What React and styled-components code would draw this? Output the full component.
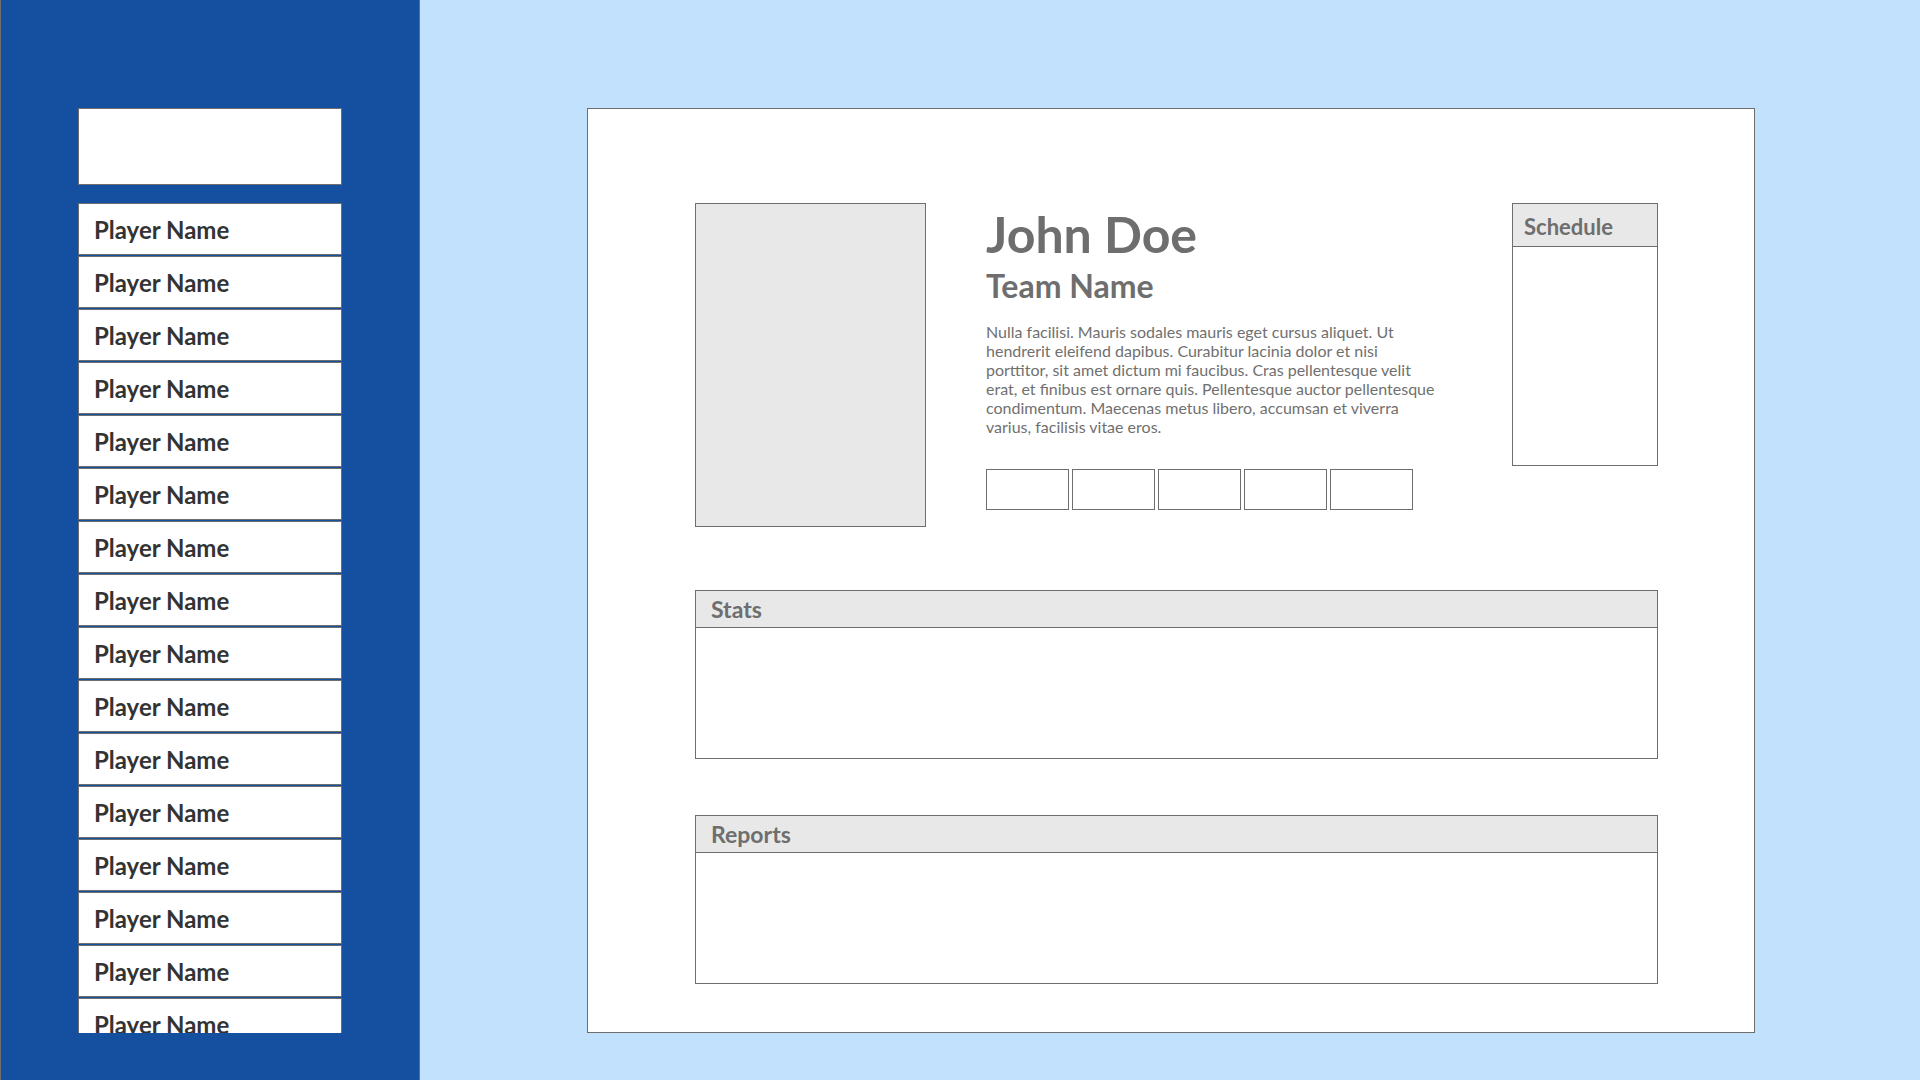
import React from 'react';
import styled, { createGlobalStyle } from 'styled-components';

const GlobalStyle = createGlobalStyle`
    html, body {
        margin: 0;
        padding: 0;
    }
    body {
        font-family: Lato, "Open Sans", sans-serif;
        background-color: #c1e1fd;
    }
`;

const Page = styled.div`
    display: flex;
    width: 1920px;
    height: 1080px;
    overflow: hidden;
`;

const Sidebar = styled.aside`
    box-sizing: border-box;
    width: 420px;
    height: 1080px;
    background-color: #14509f;
    border-left: 1px solid #6e6e6e;
    border-right: 1px solid #6e6e6e;
    padding: 108px 77px 47px;
    display: flex;
    flex-direction: column;
`;

const SearchBox = styled.div`
    box-sizing: border-box;
    height: 77px;
    background-color: #fff;
    border: 1px solid #6e6e6e;
    flex-shrink: 0;
`;

const PlayerList = styled.ul`
    list-style: none;
    margin: 18px 0 0;
    padding: 0;
    flex: 1;
    overflow: hidden;
`;

const PlayerItem = styled.li`
    box-sizing: border-box;
    height: 52px;
    margin-bottom: 1px;
    padding: 0 15px;
    background-color: #fff;
    border: 1px solid #6e6e6e;
    display: flex;
    align-items: center;
    font-size: 24px;
    font-weight: 700;
    color: #333;
    cursor: pointer;
`;

const Main = styled.main`
    flex: 1;
    padding: 108px 0 47px;
    display: flex;
    justify-content: center;
`;

const Card = styled.section`
    box-sizing: border-box;
    width: 1168px;
    height: 925px;
    margin-left: 2px;
    background-color: #fff;
    border: 1px solid #6e6e6e;
    padding: 94px 96px 48px 107px;
    display: flex;
    flex-direction: column;
`;

const TopRow = styled.div`
    display: flex;
    align-items: flex-start;
    height: 324px;
`;

const Photo = styled.div`
    box-sizing: border-box;
    width: 231px;
    height: 324px;
    background-color: #e8e8e8;
    border: 1px solid #6e6e6e;
    flex-shrink: 0;
`;

const Info = styled.div`
    margin-left: 60px;
    padding-top: 6px;
    color: #6e6e6e;
`;

const Name = styled.h1`
    margin: 0;
    font-size: 50px;
    line-height: 1;
    font-weight: 700;
`;

const Team = styled.h2`
    margin: 11px 0 0;
    font-size: 32px;
    line-height: 1;
    font-weight: 700;
`;

const Bio = styled.p`
    margin: 20px 0 0;
    width: 458px;
    font-size: 16px;
    line-height: 19px;
    color: #707070;
`;

const BadgeRow = styled.div`
    display: flex;
    gap: 3px;
    margin-top: 33px;
`;

const Badge = styled.div`
    box-sizing: border-box;
    width: 83px;
    height: 41px;
    border: 1px solid #6e6e6e;
`;

const Panel = styled.div`
    box-sizing: border-box;
    border: 1px solid #6e6e6e;
    background-color: #fff;
    display: flex;
    flex-direction: column;
    width: ${(p) => p.width || 'auto'};
    height: ${(p) => p.height};
    margin-top: ${(p) => p.top || '0'};
    margin-left: ${(p) => (p.right ? 'auto' : '0')};
    flex-shrink: 0;
`;

const PanelHeader = styled.div`
    box-sizing: border-box;
    height: ${(p) => p.height};
    background-color: #e8e8e8;
    border-bottom: 1px solid #6e6e6e;
    padding: ${(p) => p.nudge || '0'} 0 0 ${(p) => p.pad};
    display: flex;
    align-items: center;
    font-size: ${(p) => p.size};
    font-weight: 700;
    color: #6e6e6e;
`;

const players = Array.from({ length: 16 }, () => 'Player Name');

const App = () => {
    return (
        <Page>
            <GlobalStyle />
            <Sidebar>
                <SearchBox />
                <PlayerList>
                    {players.map((name, i) => (
                        <PlayerItem key={i}>{name}</PlayerItem>
                    ))}
                </PlayerList>
            </Sidebar>
            <Main>
                <Card>
                    <TopRow>
                        <Photo />
                        <Info>
                            <Name>John Doe</Name>
                            <Team>Team Name</Team>
                            <Bio>
                                Nulla facilisi. Mauris sodales mauris eget cursus aliquet. Ut hendrerit eleifend
                                dapibus. Curabitur lacinia dolor et nisi porttitor, sit amet dictum mi faucibus.
                                Cras pellentesque velit erat, et finibus est ornare quis. Pellentesque auctor
                                pellentesque condimentum. Maecenas metus libero, accumsan et viverra varius,
                                facilisis vitae eros.
                            </Bio>
                            <BadgeRow>
                                {[0, 1, 2, 3, 4].map((i) => (
                                    <Badge key={i} />
                                ))}
                            </BadgeRow>
                        </Info>
                        <Panel width="146px" height="263px" right>
                            <PanelHeader height="43px" pad="11px" size="22px" nudge="2px">Schedule</PanelHeader>
                        </Panel>
                    </TopRow>
                    <Panel height="169px" top="63px">
                        <PanelHeader height="37px" pad="15px" size="23px">Stats</PanelHeader>
                    </Panel>
                    <Panel height="169px" top="56px">
                        <PanelHeader height="37px" pad="15px" size="23px">Reports</PanelHeader>
                    </Panel>
                </Card>
            </Main>
        </Page>
    );
};

export default App;
